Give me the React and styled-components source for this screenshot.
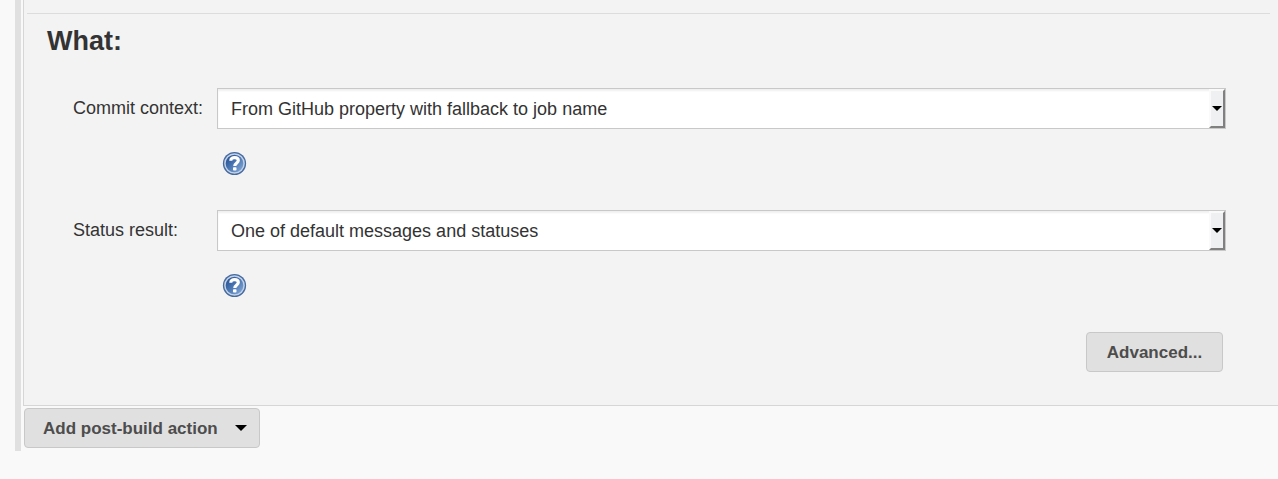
import React from "react";
import styled, { createGlobalStyle } from "styled-components";

const GlobalStyle = createGlobalStyle`
  *, *::before, *::after { box-sizing: border-box; }
  body {
    margin: 0;
    background: #f9f9f9;
    color: #333;
    font: 18px/24px "Liberation Sans", Arial, sans-serif;
  }
`;

const Section = styled.main`
  margin-left: 15px;
  padding: 0 0 3px 2px;
  border-left: 6px solid #e0e0e0;
`;

const Panel = styled.section`
  padding-bottom: 33px;
  border: solid #d6d6d6;
  border-width: 0 0 1px 1px;
  background: #f3f3f3;
`;

const Divider = styled.hr`
  height: 1px;
  margin: 0 8px 0 3px;
  border: 0;
  background: #dcdcdc;
`;

const PanelTop = styled.div`
  padding-top: 13px;
`;

const Title = styled.h2`
  margin: 11px 0 0 23px;
  font-size: 27px;
  line-height: 32px;
`;

const Form = styled.form`
  margin: 31px 52px 0 49px;
`;

const Field = styled.div`
  display: grid;
  grid-template-columns: 144px 1fr;
  row-gap: 22px;
  margin-bottom: 34px;
`;

const Label = styled.label`
  padding-top: 8px;
  white-space: nowrap;
`;

const SelectFrame = styled.div`
  position: relative;
`;

const Select = styled.select`
  display: block;
  appearance: none;
  width: 100%;
  height: 41px;
  padding: 0 24px 0 13px;
  border: 1px solid #c8c8c8;
  border-radius: 0;
  background: #fff;
  box-shadow: inset 0 2px 2px #f0f0f0;
  color: #333;
  font: inherit;
`;

const SelectArrow = styled.span`
  position: absolute;
  top: 1px;
  right: 1px;
  bottom: 1px;
  display: flex;
  align-items: center;
  justify-content: center;
  width: 16px;
  border: 2px solid;
  border-color: #fafafa #808080 #808080 #fafafa;
  background: #eff0f1;
  pointer-events: none;
`;

const Caret = styled.span`
  border: solid transparent;
  border-width: ${(p) => (p.$large ? "6px 6px 0" : "5px 5px 0")};
  border-top-color: #000;
`;

const HelpButton = styled.button`
  grid-column: 2;
  justify-self: start;
  width: 25px;
  height: 25px;
  margin-left: 5px;
  padding: 0;
  border: 0;
  background: none;
  svg { display: block; }
`;

const Button = styled.button`
  display: flex;
  align-items: center;
  justify-content: ${(p) => (p.$menu ? "space-between" : "center")};
  width: ${(p) => (p.$menu ? 236 : 137)}px;
  height: 40px;
  padding: ${(p) => (p.$menu ? "0 12px 0 18px" : "0")};
  border: 1px solid #c8c8c8;
  border-radius: 4px;
  background: #e0e0e0;
  color: #4d4d4d;
  font: bold 17px/24px "Liberation Sans", Arial, sans-serif;
`;

const ButtonText = styled.span`
  padding-top: 2px;
`;

const Actions = styled.div`
  display: flex;
  justify-content: flex-end;
  padding-right: 3px;
`;

const Footer = styled.footer`
  padding: 2px 0 0 1px;
`;

function HelpIcon({ id }) {
  return (
    <svg width="25" height="25" viewBox="0 0 25 25" aria-hidden="true">
      <defs>
        <linearGradient id={id} x1="0" y1="0" x2="1" y2="1">
          <stop offset="0" stopColor="#1d4486" />
          <stop offset="0.4" stopColor="#416eac" />
          <stop offset="1" stopColor="#8fb2dc" />
        </linearGradient>
      </defs>
      <circle cx="12.5" cy="12.5" r="11.6" fill="#456a9e" />
      <circle cx="12.5" cy="12.5" r="9.6" fill={`url(#${id})`} stroke="#c3d2e6" strokeWidth="1.5" />
      <path
        d="M8.8 9.8C8.8 7.5 10.5 6.6 12.6 6.6S16.3 7.6 16.3 9.6C16.3 12 12.8 12 12.8 15.1"
        fill="none"
        stroke="#fff"
        strokeWidth="3.2"
      />
      <rect x="11" y="16.3" width="3.5" height="3.2" rx="0.8" fill="#fff" />
    </svg>
  );
}

function SelectField({ id, label, value }) {
  return (
    <Field>
      <Label htmlFor={id}>{label}</Label>
      <SelectFrame>
        <Select id={id}>
          <option>{value}</option>
        </Select>
        <SelectArrow>
          <Caret />
        </SelectArrow>
      </SelectFrame>
      <HelpButton type="button" aria-label={`Help for ${label}`}>
        <HelpIcon id={`${id}-shade`} />
      </HelpButton>
    </Field>
  );
}

export default function App() {
  return (
    <>
      <GlobalStyle />
      <Section>
        <Panel>
          <PanelTop>
            <Divider />
          </PanelTop>
          <Title>What:</Title>
          <Form>
            <SelectField
              id="context"
              label="Commit context:"
              value="From GitHub property with fallback to job name"
            />
            <SelectField
              id="status"
              label="Status result:"
              value="One of default messages and statuses"
            />
            <Actions>
              <Button type="button">
                <ButtonText>Advanced...</ButtonText>
              </Button>
            </Actions>
          </Form>
        </Panel>
        <Footer>
          <Button type="button" $menu>
            <ButtonText>Add post-build action</ButtonText>
            <Caret $large />
          </Button>
        </Footer>
      </Section>
    </>
  );
}
